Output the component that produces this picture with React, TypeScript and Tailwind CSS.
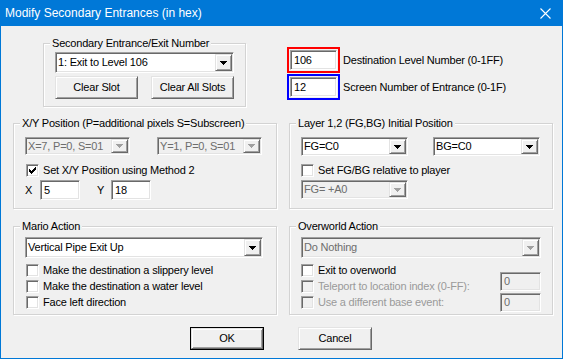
import React from "react";

type P = { className?: string; children?: React.ReactNode };

function Sunken({ className = "", children }: P) {
  return (
    <div
      className={`flex items-center border border-t-[#a0a0a0] border-l-[#a0a0a0] border-b-white border-r-white shadow-[inset_1px_1px_0_#696969,inset_-1px_-1px_0_#e3e3e3] ${className}`}
    >
      {children}
    </div>
  );
}

function Arrow({ disabled }: { disabled?: boolean }) {
  return (
    <div className="flex h-full w-[17px] items-center justify-center bg-[#f0f0f0] border border-t-[#e3e3e3] border-l-[#e3e3e3] border-b-[#696969] border-r-[#696969] shadow-[inset_1px_1px_0_#fff,inset_-1px_-1px_0_#a0a0a0]">
      <svg width="7" height="4" viewBox="0 0 7 4" shapeRendering="crispEdges">
        <path
          d="M0 0h7v1H0zM1 1h5v1H1zM2 2h3v1H2zM3 3h1v1H3z"
          fill={disabled ? "#a0a0a0" : "#000"}
        />
      </svg>
    </div>
  );
}

function Combo({
  className = "",
  value,
  disabled,
}: {
  className?: string;
  value: string;
  disabled?: boolean;
}) {
  return (
    <Sunken
      className={`p-[1px] ${disabled ? "bg-[#f0f0f0] text-[#6d6d6d]" : "bg-white text-black"} ${className}`}
    >
      <span className="flex-1 whitespace-nowrap pl-[1px]">{value}</span>
      <Arrow disabled={disabled} />
    </Sunken>
  );
}

function Field({
  className = "",
  value,
  disabled,
}: {
  className?: string;
  value: string;
  disabled?: boolean;
}) {
  return (
    <Sunken
      className={`pl-[3px] ${disabled ? "bg-[#f0f0f0] text-[#6d6d6d]" : "bg-white text-black"} ${className}`}
    >
      {value}
    </Sunken>
  );
}

function Check({
  label,
  checked,
  disabled,
}: {
  label: string;
  checked?: boolean;
  disabled?: boolean;
}) {
  return (
    <div className="flex h-[13px] items-center gap-[4px]">
      <Sunken
        className={`h-[13px] w-[13px] justify-center ${disabled ? "bg-[#f0f0f0]" : "bg-white"}`}
      >
        {checked && (
          <svg width="7" height="7" viewBox="0 0 7 7" shapeRendering="crispEdges">
            <path
              d="M6 0h1v3H6zM5 1h1v3H5zM4 2h1v3H4zM3 3h1v3H3zM2 4h1v3H2zM1 3h1v3H1zM0 2h1v3H0z"
              fill="#000"
            />
          </svg>
        )}
      </Sunken>
      <span className={`whitespace-nowrap ${disabled ? "text-[#9a9a9a]" : "text-black"}`}>
        {label}
      </span>
    </div>
  );
}

function Btn({ className = "", children }: P) {
  return (
    <div
      className={`flex items-center justify-center bg-[#f0f0f0] border border-t-[#e3e3e3] border-l-[#e3e3e3] border-b-[#696969] border-r-[#696969] shadow-[inset_1px_1px_0_#fff,inset_-1px_-1px_0_#a0a0a0] ${className}`}
    >
      {children}
    </div>
  );
}

function Group({
  className = "",
  label,
  children,
}: {
  className?: string;
  label: string;
  children?: React.ReactNode;
}) {
  return (
    <div
      className={`relative border border-[#d3d3d3] shadow-[inset_1px_1px_0_#fff,1px_1px_0_#fff] ${className}`}
    >
      <span className="absolute left-[6px] top-[-8px] whitespace-nowrap bg-[#f0f0f0] px-[2px] leading-[14px]">
        {label}
      </span>
      {children}
    </div>
  );
}

export default function App() {
  return (
    <div className="flex h-[359px] w-[563px] flex-col bg-[#f0f0f0] font-['Liberation_Sans',Arial,sans-serif] text-[11px] leading-[13px] tracking-[-0.2px] text-black">
      {/* title bar */}
      <div className="flex h-[26px] items-center justify-between bg-[#0078d7] pl-[5px] pr-[12px] text-white">
        <span className="text-[12px] tracking-[0px]">Modify Secondary Entrances (in hex)</span>
        <svg width="11" height="11" viewBox="0 0 11 11">
          <path d="M0.5 0.5L10.5 10.5M10.5 0.5L0.5 10.5" stroke="#fff" strokeWidth="1.1" />
        </svg>
      </div>

      <div className="flex flex-1 flex-col border-x border-b border-[#0078d7]">
        {/* row 1 */}
        <div className="mt-[17px] flex">
          <Group label="Secondary Entrance/Exit Number" className="ml-[42px] h-[64px] w-[203px] pl-[11px] pt-[8px]">
            <Combo className="h-[21px] w-[179px]" value="1: Exit to Level 106" />
            <div className="mt-[3px] flex gap-[13px]">
              <Btn className="h-[23px] w-[83px]">Clear Slot</Btn>
              <Btn className="h-[23px] w-[83px]">Clear All Slots</Btn>
            </div>
          </Group>
          <div className="ml-[41px] mt-[4px] flex flex-col gap-[1px]">
            <div className="flex items-center gap-[3px]">
              <div className="border-2 border-[#ff0000] p-[1px]">
                <Field className="h-[20px] w-[47px]" value="106" />
              </div>
              <span>Destination Level Number (0-1FF)</span>
            </div>
            <div className="flex items-center gap-[3px]">
              <div className="border-2 border-[#0000ff] p-[1px]">
                <Field className="h-[20px] w-[47px]" value="12" />
              </div>
              <span>Screen Number of Entrance (0-1F)</span>
            </div>
          </div>
        </div>

        {/* row 2 */}
        <div className="mt-[16px] flex gap-[12px] pl-[12px]">
          <Group label="X/Y Position (P=additional pixels S=Subscreen)" className="h-[86px] w-[264px] pl-[11px] pt-[13px]">
            <div className="flex gap-[27px]">
              <Combo className="h-[18px] w-[105px]" value="X=7, P=0, S=01" disabled />
              <Combo className="h-[18px] w-[105px]" value="Y=1, P=0, S=01" disabled />
            </div>
            <div className="ml-[1px] mt-[9px]">
              <Check label="Set X/Y Position using Method 2" checked />
            </div>
            <div className="mt-[3px] flex items-center">
              <span className="w-[15px]">X</span>
              <Field className="h-[20px] w-[40px]" value="5" />
              <span className="ml-[17px] w-[14px]">Y</span>
              <Field className="h-[20px] w-[40px]" value="18" />
            </div>
          </Group>
          <Group label="Layer 1,2 (FG,BG) Initial Position" className="h-[86px] w-[264px] pl-[11px] pt-[13px]">
            <div className="flex gap-[25px]">
              <Combo className="h-[19px] w-[107px]" value="FG=C0" />
              <Combo className="h-[19px] w-[107px]" value="BG=C0" />
            </div>
            <div className="mt-[8px]">
              <Check label="Set FG/BG relative to player" />
            </div>
            <Combo className="mt-[3px] h-[19px] w-[107px]" value="FG= +A0" disabled />
          </Group>
        </div>

        {/* row 3 */}
        <div className="mt-[17px] flex gap-[12px] pl-[12px]">
          <Group label="Mario Action" className="h-[89px] w-[264px] pl-[11px] pt-[10px]">
            <Combo className="h-[21px] w-[238px]" value="Vertical Pipe Exit Up" />
            <div className="ml-[1px] mt-[6px] flex flex-col gap-[3px]">
              <Check label="Make the destination a slippery level" />
              <Check label="Make the destination a water level" />
              <Check label="Face left direction" />
            </div>
          </Group>
          <Group label="Overworld Action" className="h-[89px] w-[264px] px-[11px] pt-[10px]">
            <Combo className="h-[21px] w-full" value="Do Nothing" disabled />
            <div className="flex justify-between">
              <div className="mt-[6px] flex flex-col gap-[3px]">
                <Check label="Exit to overworld" />
                <Check label="Teleport to location index (0-FF):" disabled />
                <Check label="Use a different base event:" disabled />
              </div>
              <div className="mt-[14px] flex flex-col gap-[2px]">
                <Field className="h-[19px] w-[41px]" value="0" disabled />
                <Field className="h-[19px] w-[41px]" value="0" disabled />
              </div>
            </div>
          </Group>
        </div>

        {/* buttons */}
        <div className="mt-[12px] flex gap-[34px] pl-[189px]">
          <div className="border border-black">
            <Btn className="h-[21px] w-[72px]">OK</Btn>
          </div>
          <Btn className="h-[23px] w-[74px]">Cancel</Btn>
        </div>
      </div>
    </div>
  );
}
